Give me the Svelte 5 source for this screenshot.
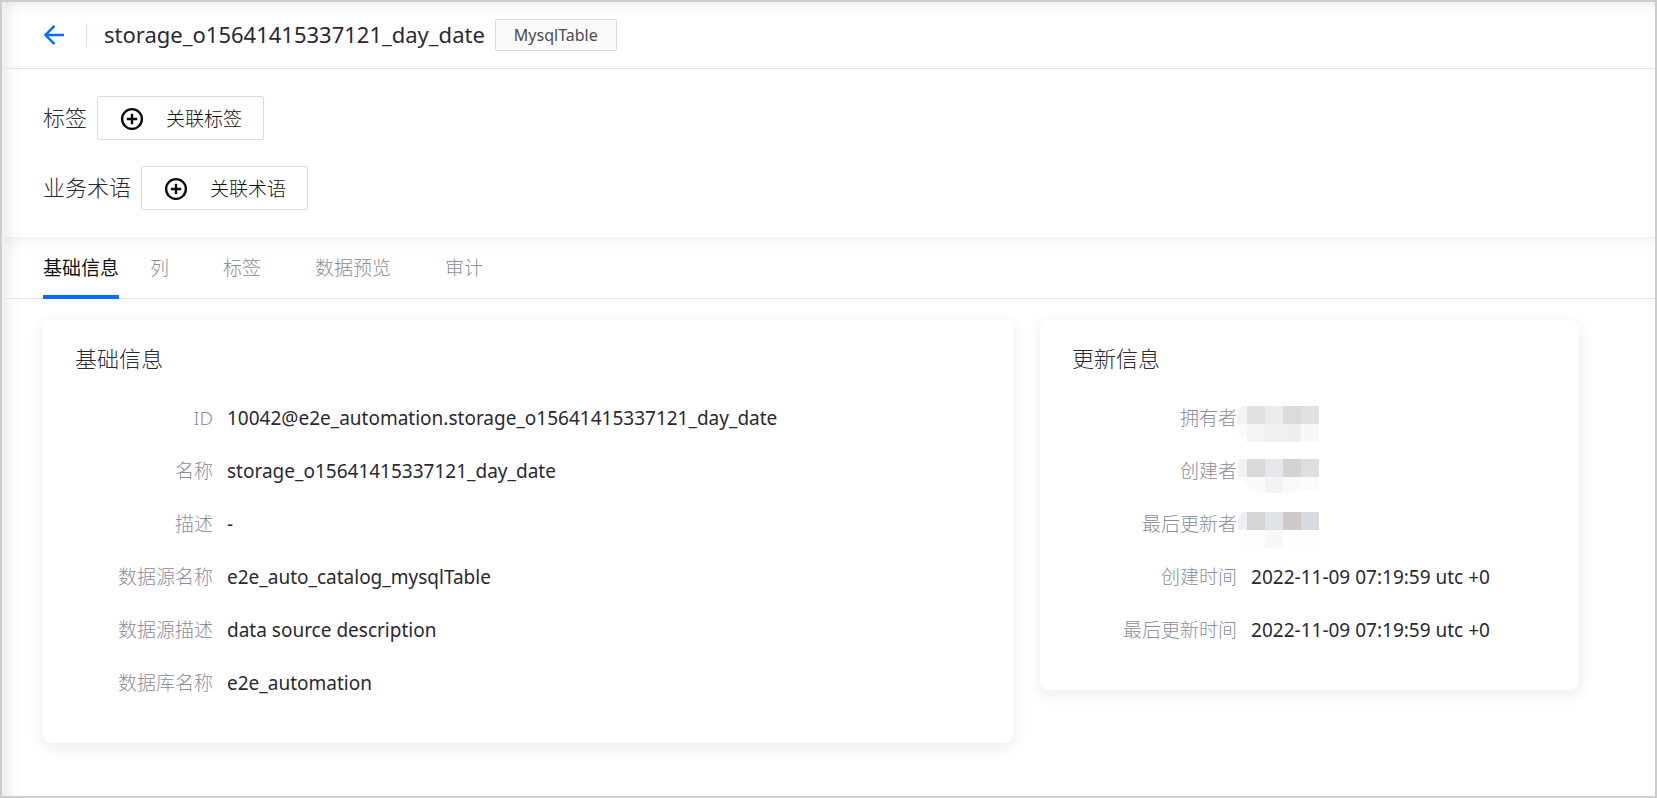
<script>
    const tabs = ['基础信息', '列', '标签', '数据预览', '审计']
    let active = $state('基础信息')

    const basic = [
        ['ID', '10042@e2e_automation.storage_o15641415337121_day_date'],
        ['名称', 'storage_o15641415337121_day_date'],
        ['描述', '-'],
        ['数据源名称', 'e2e_auto_catalog_mysqlTable'],
        ['数据源描述', 'data source description'],
        ['数据库名称', 'e2e_automation']
    ]

    // users are masked: colours of the top and bottom row of blocks
    const users = [
        {
            label: '拥有者',
            top: ['#eff1f3', '#e2e0e1', '#eaecee', '#dddbd9', '#e0e1e3'],
            bottom: ['#fafafa', '#f4f4f5', '#eff0f2', '#efefef', '#f8f8f8'],
            clip: 'M6 0H82V36H10Q0 30 0 18V9Q2 3 6 0Z'
        },
        {
            label: '创建者',
            top: ['#eff1f3', '#dbd8d9', '#e5e7eb', '#d4d1d3', '#dddee0'],
            bottom: ['#fcfcfc', '#fafafa', '#f3f3f4', '#f9f9f9', '#fbfbfb'],
            clip: 'M2 0H82V30C60 33 50 34 38 34C16 34 2 28 1 14Q0 6 2 0Z'
        },
        {
            label: '最后更新者',
            top: ['#edf0f2', '#d7d4d5', '#e0e4e7', '#cecacc', '#d9dadf'],
            bottom: ['#fdfdfd', '#fefefe', '#f8f8f8', '#fefefe', '#fefefe'],
            clip: 'M5 0H82V36H10Q0 30 1 9Q2 3 5 0Z'
        }
    ]
    const times = [
        ['创建时间', '2022-11-09 07:19:59 utc +0'],
        ['最后更新时间', '2022-11-09 07:19:59 utc +0']
    ]
</script>

{#snippet plus()}
    <svg class="plus" viewBox="0 0 24 24" aria-hidden="true">
        <circle cx="12" cy="13" r="9.9" />
        <path d="M12 7.8V18.2M6.8 13H17.2" />
    </svg>
{/snippet}

<div class="page">
    <header class="header">
        <a class="back" href="#back" aria-label="返回">
            <svg viewBox="0 0 20 20"><path d="M10.5 0.8L1.5 10L10.5 19.2M1.5 10H20" /></svg>
        </a>
        <h1 class="name">storage_o15641415337121_day_date</h1>
        <span class="type">MysqlTable</span>
    </header>

    <section class="relations">
        <div class="relation">
            <span>标签</span>
            <button class="add">{@render plus()}关联标签</button>
        </div>
        <div class="relation">
            <span>业务术语</span>
            <button class="add">{@render plus()}关联术语</button>
        </div>
    </section>

    <nav class="tabs">
        {#each tabs as tab}
            <button class="tab" class:active={tab === active} onclick={() => (active = tab)}>{tab}</button>
        {/each}
    </nav>

    <main class="cards">
        <section class="card">
            <h2 class="title">基础信息</h2>
            <dl class="info">
                {#each basic as [label, value]}
                    <dt>{label}</dt>
                    <dd>{value}</dd>
                {/each}
            </dl>
        </section>
        <section class="card">
            <h2 class="title">更新信息</h2>
            <dl class="info update">
                {#each users as user, i}
                    <dt>{user.label}</dt>
                    <dd class="masked">
                        <svg class="mask" viewBox="0 0 82 36" aria-hidden="true">
                            <clipPath id="mask-{i}"><path d={user.clip} /></clipPath>
                            <g clip-path="url(#mask-{i})" shape-rendering="crispEdges">
                                {#each user.top as color, n}
                                    <rect x={n * 18 - 8} y="0" width="18" height="18" fill={color} />
                                    <rect x={n * 18 - 8} y="18" width="18" height="18" fill={user.bottom[n]} />
                                {/each}
                            </g>
                        </svg>
                    </dd>
                {/each}
                {#each times as [label, value]}
                    <dt>{label}</dt>
                    <dd>{value}</dd>
                {/each}
            </dl>
        </section>
    </main>
</div>

<style>
    :global(body) {
        background: #fff;
    }
    .page {
        box-sizing: border-box;
        min-height: 100vh;
        border: 2px solid #cdcdcd;
        padding-left: 3px;
        background: #fff;
        color: #2a2833;
        font-family: 'Noto Sans', 'Noto Sans CJK SC', sans-serif;
        font-size: 19px;
        box-shadow: inset 18px 0 18px -14px rgba(0, 0, 0, 0.1);
    }
    h1, h2, dl, dd {
        margin: 0;
        font-weight: 400;
    }
    button {
        font-family: inherit;
        cursor: pointer;
    }
    .header {
        display: flex;
        align-items: center;
        height: 67px;
        padding: 0 39px 1px;
        border-bottom: 1px solid #e3e3ea;
        box-shadow: inset 0 14px 16px -14px rgba(0, 0, 0, 0.1);
        box-sizing: border-box;
    }
    .back {
        height: 24px;
        display: flex;
        align-items: center;
        padding-right: 22px;
        border-right: 1px solid #dcdce4;
        margin-right: 17px;
    }
    .back svg {
        width: 20px;
        height: 20px;
        fill: none;
        stroke: #0a6cff;
        stroke-width: 2.4;
    }
    .name {
        font-size: 22px;
        line-height: 28px;
        padding-bottom: 2px;
    }
    .type {
        box-sizing: border-box;
        height: 32px;
        margin-left: 10px;
        padding: 0 18px;
        border: 1px solid #d9d9e3;
        border-radius: 2px;
        background: #fafafa;
        color: #4b4a55;
        font-size: 16px;
        line-height: 30px;
    }
    .relations {
        display: flex;
        flex-direction: column;
        gap: 26px;
        padding: 27px 38px 27px;
    }
    .relation {
        display: flex;
        align-items: center;
        gap: 10px;
        font-size: 22px;
        font-weight: 300;
        line-height: 40px;
    }
    .relation span {
        padding-bottom: 3px;
    }
    .add {
        display: flex;
        align-items: center;
        gap: 22px;
        height: 44px;
        padding: 0 21px 0 22px;
        border: 1px solid #dadae4;
        border-radius: 2px;
        background: #fff;
        color: #111;
        font-size: 19px;
        font-weight: 300;
    }
    .plus {
        width: 24px;
        height: 24px;
        fill: none;
        stroke: #0c0c0c;
        stroke-width: 2.4;
    }
    .tabs {
        display: flex;
        height: 62px;
        box-sizing: border-box;
        padding-left: 38px;
        border-bottom: 1px solid #e3e4e9;
        box-shadow: inset 0 14px 14px -12px rgba(0, 0, 0, 0.08);
    }
    .tab {
        height: 62px;
        margin-right: 54px;
        padding: 1px 0 0;
        border: 0;
        border-bottom: 4px solid transparent;
        background: none;
        color: #8c8c9b;
        font-size: 19px;
        font-weight: 300;
    }
    .tab:first-child {
        margin-right: 31px;
    }
    .tab.active {
        border-color: #0a6cff;
        color: #111;
        font-weight: 400;
    }
    .cards {
        display: grid;
        grid-template-columns: 9fr 5fr;
        align-items: start;
        gap: 27px;
        padding: 21px 76px 40px 38px;
    }
    .card {
        padding: 22px 32px 33px;
        border-radius: 8px;
        background: #fff;
        box-shadow: 0 4px 16px rgba(20, 20, 50, 0.09);
    }
    .title {
        margin-bottom: 18px;
        font-size: 22px;
        font-weight: 300;
        line-height: 32px;
    }
    .info {
        display: grid;
        grid-template-columns: 138px 1fr;
        grid-auto-rows: 53px;
        column-gap: 14px;
        line-height: 52px;
    }
    .update {
        grid-template-columns: 165px 1fr;
    }
    dt {
        color: #8c8c9b;
        font-weight: 300;
        text-align: right;
        white-space: nowrap;
    }
    .masked {
        margin-left: -14px;
        padding-top: 14px;
        line-height: 0;
    }
    .mask {
        width: 82px;
        height: 36px;
    }
</style>
